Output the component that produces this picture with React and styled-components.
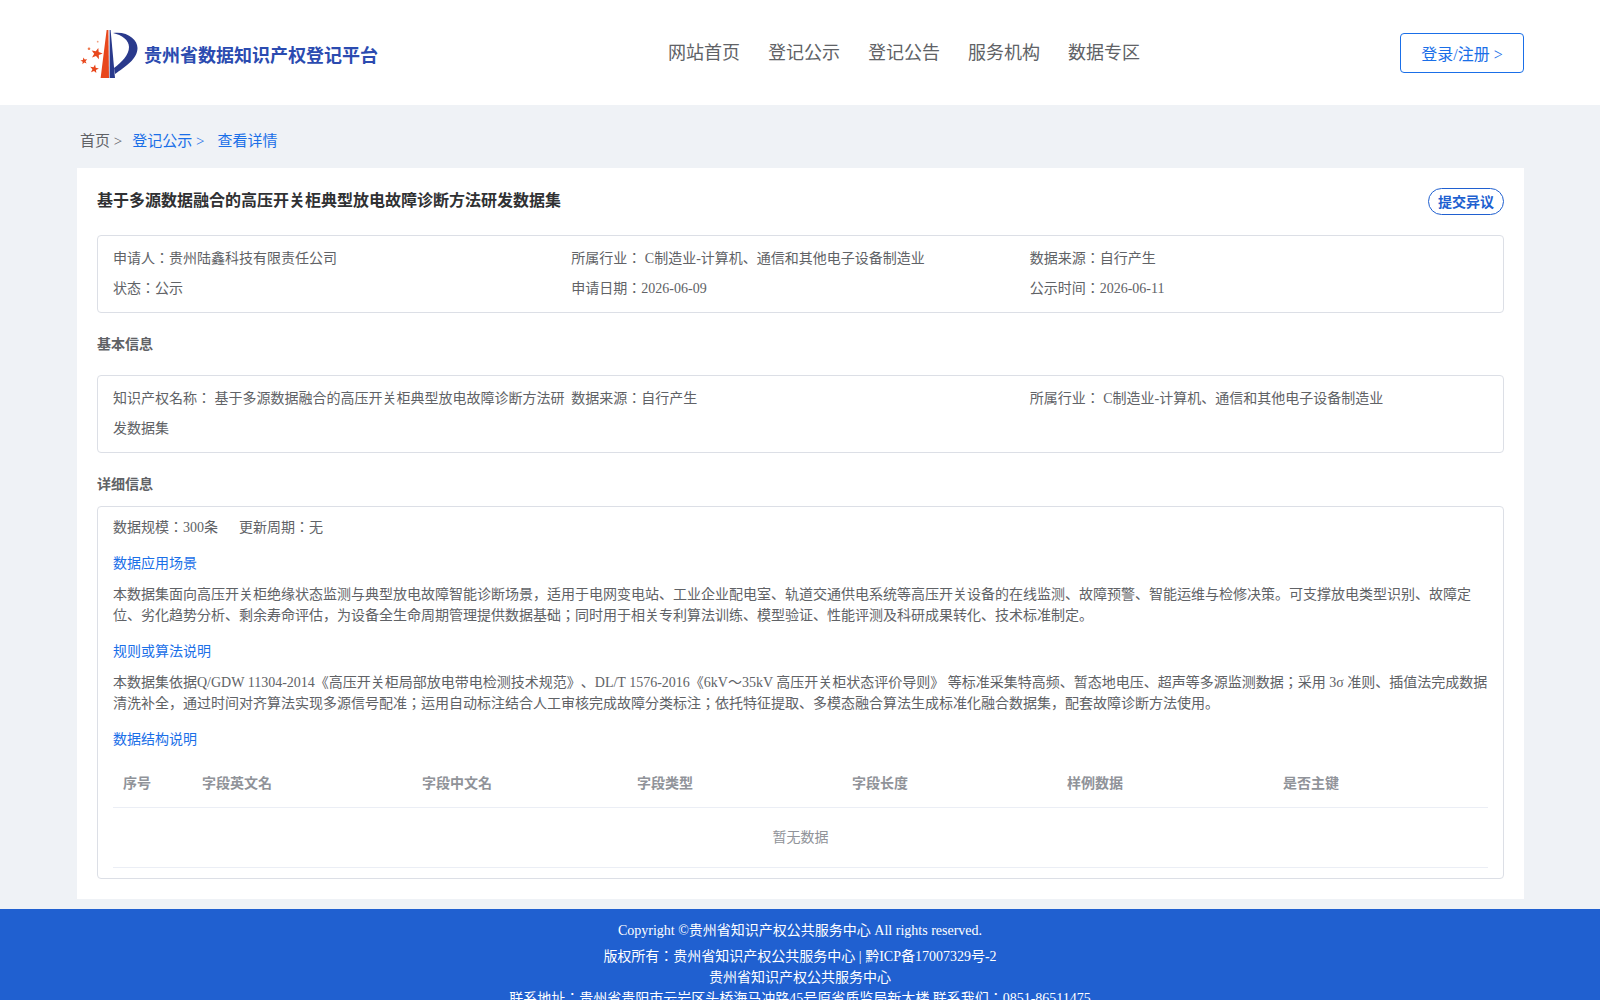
import React from 'react'
import styled, { createGlobalStyle } from 'styled-components'

const GlobalStyle = createGlobalStyle`
  * { box-sizing: border-box; }
  body {
    margin: 0;
    background: #eff2f6;
    font-family: "Liberation Serif", "Noto Sans CJK JP", serif;
    font-size: 14px;
    color: #606266;
    text-spacing-trim: space-all;
  }
`

const starPoints = (cx, cy, r, rot = 0) => {
  const pts = []
  for (let i = 0; i < 10; i++) {
    const rad = i % 2 === 0 ? r : r * 0.42
    const a = ((i * 36 - 90 + rot) * Math.PI) / 180
    pts.push(`${(cx + rad * Math.cos(a)).toFixed(1)},${(cy + rad * Math.sin(a)).toFixed(1)}`)
  }
  return pts.join(' ')
}

function Logo() {
  return (
    <LogoSvg viewBox="80 27 60 50" width="60" height="50">
      <path d="M106.6 29 L108.4 29 L109 77 L100.6 77 Z" fill="#e8471c" />
      <path d="M109.6 29 L110.6 29 L115 77 L109.6 77 Z" fill="#2a3a8c" />
      <path d="M113 32 C128 30 137.5 39 137.5 47 C137.5 58 125 66 115 73 L114 67 C122 61 129 54 129 46 C129 39 122 34 113 32 Z" fill="#2a3a8c" />
      <polygon points={starPoints(96.7, 52.7, 6, 15)} fill="#e8471c" />
      <polygon points={starPoints(84, 60, 3.6, -10)} fill="#e8471c" />
      <polygon points={starPoints(94.3, 68, 4.6, 10)} fill="#e8471c" />
      <circle cx="89" cy="47.7" r="1.3" fill="#ee7a50" />
      <circle cx="97.7" cy="40.7" r="0.9" fill="#f0a080" />
    </LogoSvg>
  )
}

const navItems = ['网站首页', '登记公示', '登记公告', '服务机构', '数据专区']
const columns = ['序号', '字段英文名', '字段中文名', '字段类型', '字段长度', '样例数据', '是否主键']

function App() {
  return (
    <>
      <GlobalStyle />
      <Header>
        <Brand>
          <Logo />
          <BrandName>贵州省数据知识产权登记平台</BrandName>
        </Brand>
        <Nav>
          {navItems.map((item) => (
            <NavLink key={item}>{item}</NavLink>
          ))}
        </Nav>
        <LoginButton>登录/注册 &gt;</LoginButton>
      </Header>

      <Main>
        <Breadcrumb>
          <Crumb>首页 &gt;</Crumb>
          <Crumb $link>登记公示 &gt;</Crumb>
          <Crumb $link $last>查看详情</Crumb>
        </Breadcrumb>

        <Card>
          <TitleRow>
            <Title>基于多源数据融合的高压开关柜典型放电故障诊断方法研发数据集</Title>
            <ObjectButton>提交异议</ObjectButton>
          </TitleRow>

          <InfoBox>
            <InfoItem>申请人：贵州陆鑫科技有限责任公司</InfoItem>
            <InfoItem>所属行业： C制造业-计算机、通信和其他电子设备制造业</InfoItem>
            <InfoItem>数据来源：自行产生</InfoItem>
            <InfoItem>状态：公示</InfoItem>
            <InfoItem>申请日期：2026-06-09</InfoItem>
            <InfoItem>公示时间：2026-06-11</InfoItem>
          </InfoBox>

          <SectionTitle>基本信息</SectionTitle>
          <InfoBox>
            <InfoItem>知识产权名称： 基于多源数据融合的高压开关柜典型放电故障诊断方法研发数据集</InfoItem>
            <InfoItem>数据来源：自行产生</InfoItem>
            <InfoItem>所属行业： C制造业-计算机、通信和其他电子设备制造业</InfoItem>
          </InfoBox>

          <SectionTitle $tight>详细信息</SectionTitle>
          <DetailBox>
            <ScaleRow>
              <span>数据规模：300条</span>
              <span>更新周期：无</span>
            </ScaleRow>
            <BlueHeading>数据应用场景</BlueHeading>
            <Paragraph>本数据集面向高压开关柜绝缘状态监测与典型放电故障智能诊断场景，适用于电网变电站、工业企业配电室、轨道交通供电系统等高压开关设备的在线监测、故障预警、智能运维与检修决策。可支撑放电类型识别、故障定位、劣化趋势分析、剩余寿命评估，为设备全生命周期管理提供数据基础；同时用于相关专利算法训练、模型验证、性能评测及科研成果转化、技术标准制定。</Paragraph>
            <BlueHeading>规则或算法说明</BlueHeading>
            <Paragraph>本数据集依据Q/GDW 11304-2014《高压开关柜局部放电带电检测技术规范》、DL/T 1576-2016《6kV～35kV 高压开关柜状态评价导则》 等标准采集特高频、暂态地电压、超声等多源监测数据；采用 3σ 准则、插值法完成数据清洗补全，通过时间对齐算法实现多源信号配准；运用自动标注结合人工审核完成故障分类标注；依托特征提取、多模态融合算法生成标准化融合数据集，配套故障诊断方法使用。</Paragraph>
            <BlueHeading>数据结构说明</BlueHeading>
            <Table>
              <colgroup>
                <col width="79" />
                <col width="220" />
                <col width="215" />
                <col width="215" />
                <col width="215" />
                <col width="216" />
                <col />
              </colgroup>
              <thead>
                <tr>
                  {columns.map((col) => (
                    <Th key={col}>{col}</Th>
                  ))}
                </tr>
              </thead>
              <tbody>
                <tr>
                  <EmptyCell colSpan={7}>暂无数据</EmptyCell>
                </tr>
              </tbody>
            </Table>
          </DetailBox>
        </Card>
      </Main>

      <Footer>
        <FooterLine $first>Copyright ©贵州省知识产权公共服务中心 All rights reserved.</FooterLine>
        <FooterLine>版权所有：贵州省知识产权公共服务中心 | 黔ICP备17007329号-2</FooterLine>
        <FooterLine>贵州省知识产权公共服务中心</FooterLine>
        <FooterLine>联系地址：贵州省贵阳市云岩区头桥海马冲路45号原省质监局新大楼 联系我们：0851-86511475</FooterLine>
      </Footer>
    </>
  )
}

const Header = styled.header`
  height: 105px;
  background: #fff;
  padding: 0 76px 0 80px;
  display: flex;
  align-items: center;
`
const Brand = styled.div`
  width: 588px;
  display: flex;
  align-items: center;
  gap: 4px;
`
const LogoSvg = styled.svg`
  display: block;
  overflow: visible;
`
const BrandName = styled.div`
  font-size: 18px;
  font-weight: 700;
  color: #2b4bb0;
  margin-top: 3px;
`
const Nav = styled.nav`
  display: flex;
  gap: 28px;
  margin-top: -4px;
`
const NavLink = styled.a`
  font-size: 18px;
  color: #606266;
`
const LoginButton = styled.button`
  margin-left: auto;
  width: 124px;
  height: 40px;
  background: #fff;
  border: 1px solid #1a6fe8;
  border-radius: 4px;
  color: #1a6fe8;
  font-family: inherit;
  font-size: 16px;
`
const Main = styled.main`
  padding: 0 76px 10px 77px;
`
const Breadcrumb = styled.div`
  height: 63px;
  padding: 6px 3px 0;
  display: flex;
  align-items: center;
  gap: 10px;
  font-size: 15px;
`
const Crumb = styled.span`
  color: ${(p) => (p.$link ? '#1a6fe8' : '#606266')};
  margin-left: ${(p) => (p.$last ? '3px' : '0')};
`
const Card = styled.section`
  background: #fff;
  padding: 20px;
`
const TitleRow = styled.div`
  display: flex;
  justify-content: space-between;
  align-items: flex-start;
  margin-bottom: 20px;
`
const Title = styled.h1`
  margin: 0;
  padding-top: 1px;
  font-size: 16px;
  font-weight: 700;
  color: #303133;
  line-height: 24px;
`
const ObjectButton = styled.button`
  width: 76px;
  height: 27px;
  padding: 0 0 2px;
  background: #fff;
  border: 1px solid #2060d0;
  border-radius: 14px;
  color: #2060d0;
  font-family: inherit;
  font-size: 14px;
  font-weight: 700;
`
const InfoBox = styled.div`
  border: 1px solid #dcdfe6;
  border-radius: 4px;
  padding: 8px 15px;
  display: grid;
  grid-template-columns: repeat(3, 1fr);
  line-height: 30px;
`
const InfoItem = styled.div`
  min-width: 0;
  padding-right: 5px;
`
const SectionTitle = styled.h2`
  margin: 0;
  font-size: 14px;
  font-weight: 700;
  color: #606266;
  line-height: 20px;
  padding: 22px 0 ${(p) => (p.$tight ? '11px' : '20px')};
`
const DetailBox = styled.div`
  border: 1px solid #dcdfe6;
  border-radius: 4px;
  padding: 10px 15px;
`
const ScaleRow = styled.div`
  display: flex;
  gap: 21px;
  line-height: 21px;
`
const BlueHeading = styled.div`
  color: #1a6fe8;
  line-height: 21px;
  margin-top: 15px;
`
const Paragraph = styled.p`
  margin: 10px 0 0;
  line-height: 21px;
`
const Table = styled.table`
  width: 100%;
  margin-top: 9px;
  border-collapse: collapse;
  table-layout: fixed;
`
const Th = styled.th`
  height: 48px;
  padding: 0 10px 2px;
  text-align: left;
  font-weight: 700;
  color: #909399;
  border-bottom: 1px solid #ebeef5;
`
const EmptyCell = styled.td`
  height: 60px;
  padding-bottom: 4px;
  text-align: center;
  color: #909399;
  border-bottom: 1px solid #ebeef5;
`
const Footer = styled.footer`
  background: #2060d0;
  padding: 11px 0 12px;
  text-align: center;
  color: #fff;
`
const FooterLine = styled.div`
  line-height: 21px;
  margin-bottom: ${(p) => (p.$first ? '5px' : '0')};
`

export default App
